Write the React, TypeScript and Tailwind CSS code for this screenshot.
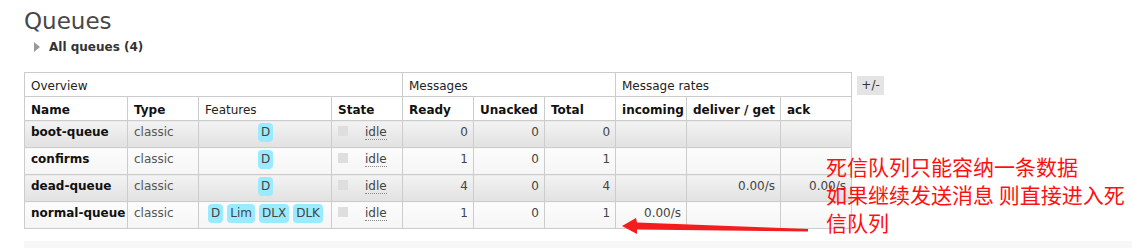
import React from "react"

type Queue = {
  name: string
  features: string[]
  ready: number
  unacked: number
  total: number
  incoming: string
  deliver: string
  ack: string
}

const queues: Queue[] = [
  { name: "boot-queue", features: ["D"], ready: 0, unacked: 0, total: 0, incoming: "", deliver: "", ack: "" },
  { name: "confirms", features: ["D"], ready: 1, unacked: 0, total: 1, incoming: "", deliver: "", ack: "" },
  { name: "dead-queue", features: ["D"], ready: 4, unacked: 0, total: 4, incoming: "", deliver: "0.00/s", ack: "0.00/s" },
  {
    name: "normal-queue",
    features: ["D", "Lim", "DLX", "DLK"],
    ready: 1,
    unacked: 0,
    total: 1,
    incoming: "0.00/s",
    deliver: "",
    ack: "",
  },
]

export default function App() {
  const groupTh = "h-[24px] whitespace-nowrap border border-[#ccc] bg-white pl-[6px] pr-[4px] pt-[5px] text-left align-top font-normal leading-[16px] text-[#222]"
  const colTh = "h-[24px] whitespace-nowrap border border-[#ccc] bg-white pl-[6px] pr-[4px] pt-[5px] text-left align-top font-bold leading-[16px] text-[#111]"

  return (
    <div className="relative h-[248px] w-[1132px] overflow-hidden bg-white pl-[24px] pt-[7px] font-['DejaVu_Sans',Verdana,sans-serif] text-[12px] text-[#444]">
      {/* Title */}
      <h1 className="text-[23px] font-normal leading-[28px] text-[#484848]">Queues</h1>
      <div className="mt-[4px] flex items-center pl-[10px]">
        <span className="inline-block h-0 w-0 border-y-[5px] border-l-[6px] border-y-transparent border-l-[#999]" />
        <span className="ml-[9px] font-bold leading-[16px] text-[#333]">All queues (4)</span>
      </div>

      {/* Queues table */}
      <div className="mt-[17px] flex items-start">
        <table className="w-[828px] table-fixed border-collapse border border-[#ccc]">
          <colgroup>
            <col className="w-[103px]" />
            <col className="w-[71px]" />
            <col className="w-[133px]" />
            <col className="w-[71px]" />
            <col className="w-[71px]" />
            <col className="w-[71px]" />
            <col className="w-[71px]" />
            <col className="w-[71px]" />
            <col className="w-[94px]" />
            <col className="w-[71px]" />
          </colgroup>
          <thead>
            <tr>
              <th colSpan={4} className={groupTh}>Overview</th>
              <th colSpan={3} className={groupTh}>Messages</th>
              <th colSpan={3} className={groupTh}>Message rates</th>
            </tr>
            <tr>
              <th className={colTh}>Name</th>
              <th className={colTh}>Type</th>
              <th className={groupTh}>Features</th>
              <th className={colTh}>State</th>
              <th className={colTh}>Ready</th>
              <th className={colTh}>Unacked</th>
              <th className={colTh}>Total</th>
              <th className={colTh}>incoming</th>
              <th className={colTh}>deliver / get</th>
              <th className={colTh}>ack</th>
            </tr>
          </thead>
          <tbody>
            {queues.map((q, i) => {
              const bg = i % 2 === 0 ? "bg-linear-to-b from-[#f3f3f3] to-[#e1e1e1]" : "bg-linear-to-b from-[#fcfcfc] to-[#f5f5f5]"
              const td = `h-[27px] whitespace-nowrap border border-[#ccc] pl-[6px] pr-[5px] pt-[2px] align-top leading-[19px] ${bg}`
              const num = `${td} text-right text-[#444]`
              return (
                <tr key={q.name}>
                  <td className={`${td} font-bold text-[#111]`}>{q.name}</td>
                  <td className={`${td} text-[#555]`}>classic</td>
                  <td className={`${td} text-center`}>
                    {q.features.map((f) => (
                      <span key={f} className="mx-[2px] inline-block rounded-[4px] bg-[#99ebff] px-[3px] leading-[19px] text-[#444]">
                        {f}
                      </span>
                    ))}
                  </td>
                  <td className={`${td} text-[#444]`}>
                    <span className="inline-block h-[10px] w-[10px] bg-[#dedede]" />
                    <span className="ml-[17px] border-b border-dotted border-[#888]">idle</span>
                  </td>
                  <td className={num}>{q.ready}</td>
                  <td className={num}>{q.unacked}</td>
                  <td className={num}>{q.total}</td>
                  <td className={num}>{q.incoming}</td>
                  <td className={num}>{q.deliver}</td>
                  <td className={num}>{q.ack}</td>
                </tr>
              )
            })}
          </tbody>
        </table>
        <span className="ml-[5px] mt-[4px] inline-block h-[19px] w-[27px] bg-[#e4e4e4] text-center leading-[19px] text-[#333]">+/-</span>
      </div>

      <div className="mt-[12px] h-[20px] bg-[#f7f7f7]" />

      {/* Red annotation */}
      <div className="absolute left-[826px] top-[152px] whitespace-nowrap font-['Noto_Sans_CJK_SC','Noto_Sans',sans-serif] text-[21px] leading-[28px] text-[#ff1010]">
        <div>死信队列只能容纳一条数据</div>
        <div>如果继续发送消息 则直接进入死</div>
        <div>信队列</div>
      </div>
      <svg className="pointer-events-none absolute left-0 top-0" width="1132" height="248" viewBox="0 0 1132 248">
        <polygon points="622,226 636,218 637,222.5 808,229 808,231.5 637,229.5 637,234" fill="#f31d1d" />
      </svg>
    </div>
  )
}
